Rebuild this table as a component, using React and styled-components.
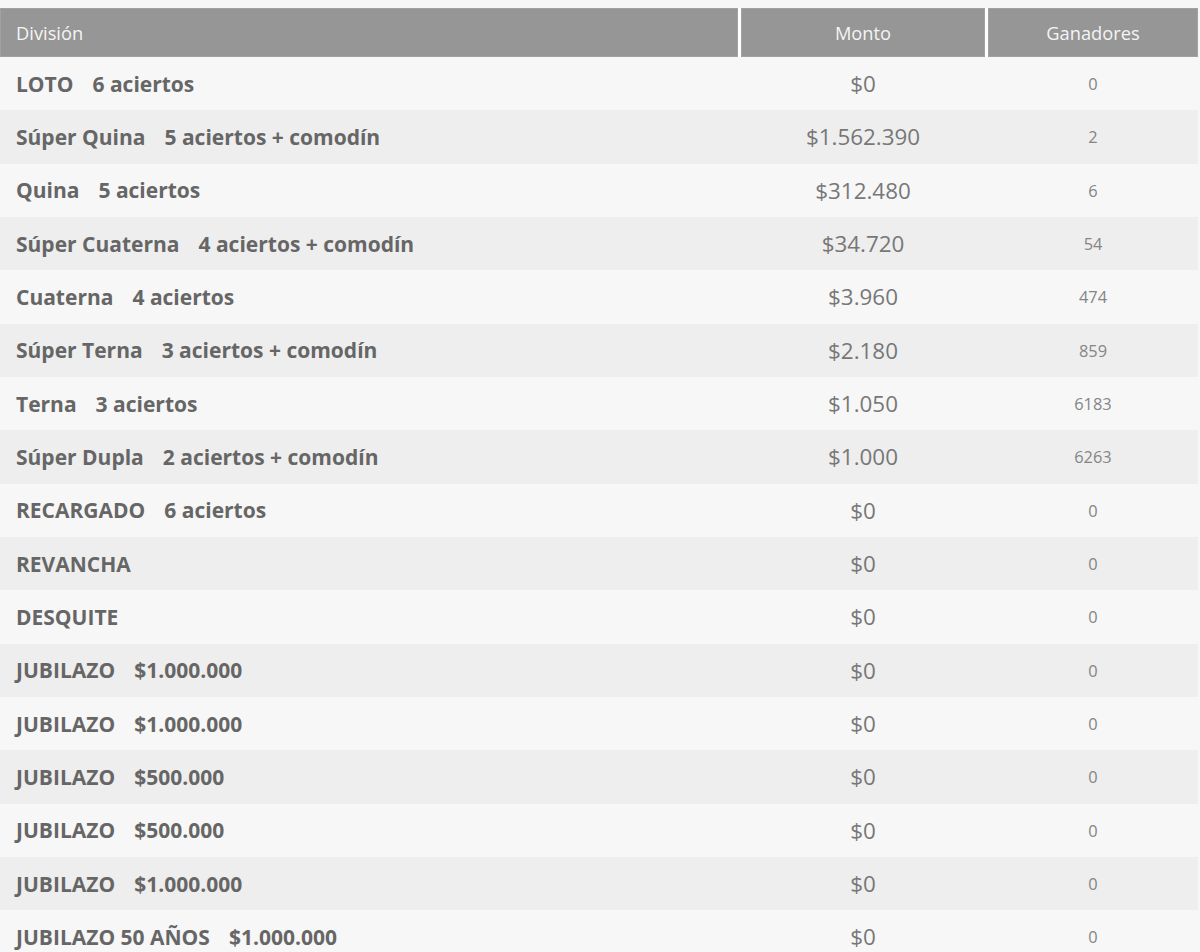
import React from "react";
import styled, { createGlobalStyle } from "styled-components";

const Global = createGlobalStyle`
  html, body { margin: 0; padding: 0; background: #f7f7f7; }
  body { font-family: "Open Sans", "Liberation Sans", sans-serif; }
`;

const Page = styled.div`
  padding-top: 8px;
  width: 1198px;
`;

const Grid = styled.div`
  display: grid;
  grid-template-columns: 738px 244px 210px;
  column-gap: 3px;
`;

const HeaderRow = styled(Grid)`
  height: 49px;
  background: #ffffff;
`;

const HeadCell = styled.div`
  background: #969696;
  color: #f4f4f4;
  font-size: 18.3px;
  display: flex;
  align-items: center;
  justify-content: ${(p) => (p.$left ? "flex-start" : "center")};
  padding-left: ${(p) => (p.$left ? "16px" : "0")};
  box-shadow: inset 0 0 0 1px #a2a2a2;
`;

const Row = styled(Grid)`
  height: 53.33px;
  background: ${(p) => (p.$alt ? "#eeeeee" : "#f7f7f7")};
  align-items: center;
`;

const Division = styled.div`
  padding-left: 16px;
  font-size: 21px;
  font-weight: 700;
  color: #666666;
  white-space: nowrap;
`;

const Detail = styled.span`
  margin-left: 19px;
`;

const Monto = styled.div`
  text-align: center;
  font-size: 22.4px;
  color: #777777;
`;

const Ganadores = styled.div`
  text-align: center;
  font-size: 16.4px;
  color: #858585;
`;

const rows = [
  ["LOTO", "6 aciertos", "$0", "0"],
  ["Súper Quina", "5 aciertos + comodín", "$1.562.390", "2"],
  ["Quina", "5 aciertos", "$312.480", "6"],
  ["Súper Cuaterna", "4 aciertos + comodín", "$34.720", "54"],
  ["Cuaterna", "4 aciertos", "$3.960", "474"],
  ["Súper Terna", "3 aciertos + comodín", "$2.180", "859"],
  ["Terna", "3 aciertos", "$1.050", "6183"],
  ["Súper Dupla", "2 aciertos + comodín", "$1.000", "6263"],
  ["RECARGADO", "6 aciertos", "$0", "0"],
  ["REVANCHA", "", "$0", "0"],
  ["DESQUITE", "", "$0", "0"],
  ["JUBILAZO", "$1.000.000", "$0", "0"],
  ["JUBILAZO", "$1.000.000", "$0", "0"],
  ["JUBILAZO", "$500.000", "$0", "0"],
  ["JUBILAZO", "$500.000", "$0", "0"],
  ["JUBILAZO", "$1.000.000", "$0", "0"],
  ["JUBILAZO 50 AÑOS", "$1.000.000", "$0", "0"],
];

export default function App() {
  return (
    <Page>
      <Global />
      <HeaderRow>
        <HeadCell $left>División</HeadCell>
        <HeadCell>Monto</HeadCell>
        <HeadCell>Ganadores</HeadCell>
      </HeaderRow>
      {rows.map(([name, detail, monto, gan], i) => (
        <Row key={i} $alt={i % 2 === 1}>
          <Division>
            {name}
            {detail && <Detail>{detail}</Detail>}
          </Division>
          <Monto>{monto}</Monto>
          <Ganadores>{gan}</Ganadores>
        </Row>
      ))}
    </Page>
  );
}
